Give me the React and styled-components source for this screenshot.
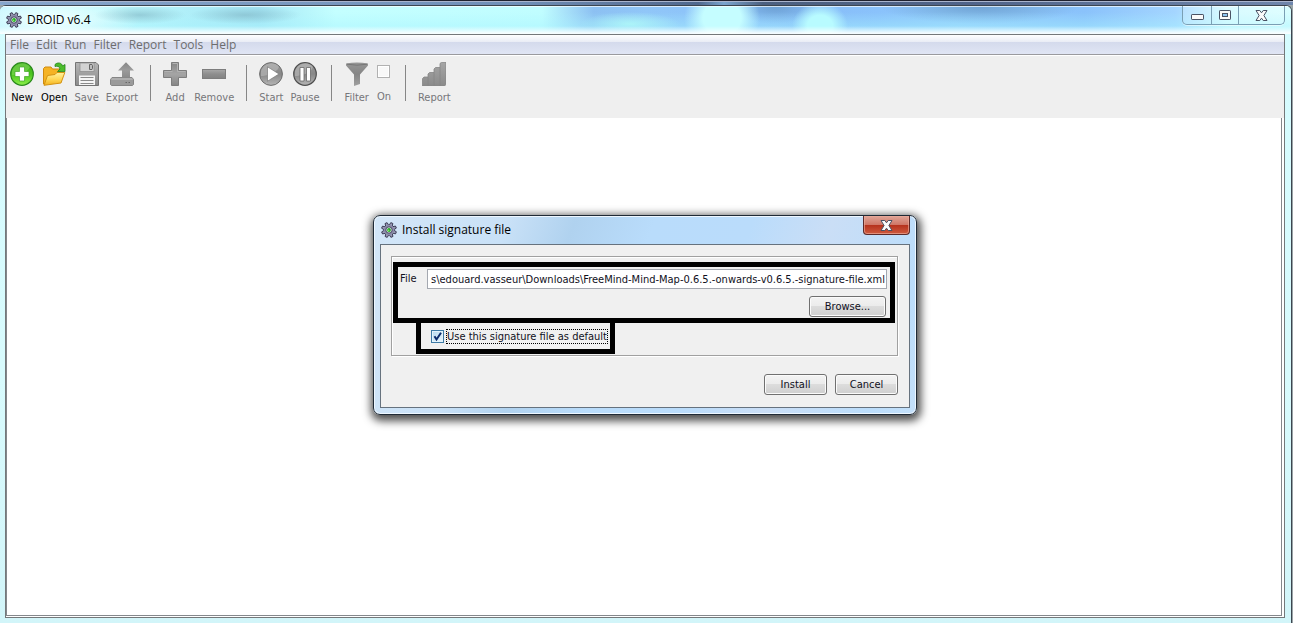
import React, { useId, useState } from "react";
import styled, { createGlobalStyle, css } from "styled-components";

const uiFont = `"DejaVu Sans Condensed", "DejaVu Sans", Tahoma, sans-serif`;
const captionFont = `"Open Sans", "Segoe UI", sans-serif`;

const GlobalStyle = createGlobalStyle`
  *, *::before, *::after { box-sizing: border-box; }
  body { margin: 0; background: #dffbfd; }
  button, input { font: inherit; color: inherit; }
  svg { display: block; flex: none; }
`;

const Desktop = styled.div`
  display: flex;
  flex-direction: column;
  min-height: 100vh;
  padding: 5px 1px 0 0;
  font: 11px/16px ${uiFont};
  background: linear-gradient(#20222e 0 1px, #a9b4cc 1px 2px, transparent 2px 5px, #9aa5a8 5px),
    linear-gradient(90deg, #86a6cc, #6f8fb8 40%, #5a7298 50%, #4f688e 54%, #7aa5cf 56%, #4c6080 59%, #50648a 75%, #6f86ac);
`;

const Window = styled.main`
  flex: 1;
  display: flex;
  flex-direction: column;
  padding: 0 6px 5px 5px;
  border: solid #3c4650;
  border-width: 1px 1px 0 0;
  border-radius: 6px 6px 0 0;
  background: linear-gradient(#d5fcff, #d8fbfd 60%, #d2f5f9);
  box-shadow: inset 0 1px 0 #e9fbff;
`;

const TitleBar = styled.header`
  display: flex;
  justify-content: space-between;
  height: 28px;
  margin: 0 -6px 0 -5px;
  padding: 0 6px 0 6px;
  border-radius: 5px 5px 0 0;
  background:
    linear-gradient(#ffffffaa 0 1px, transparent 1px 20px, #ffffffe0 27px),
    radial-gradient(ellipse 46px 9px at 140px 9px, #7fb3c299, transparent),
    radial-gradient(ellipse 56px 9px at 245px 9px, #7fb3c299, transparent),
    radial-gradient(ellipse 90px 24px at 50px 14px, #f3ffff, #f3ffff00),
    radial-gradient(ellipse 28px 24px at 820px 20px, #b8fbff 45%, #b8fbff00),
    radial-gradient(ellipse 38px 34px at 722px 12px, #c5fdff 50%, #c5fdff00),
    linear-gradient(#a8f4ff00 6px, #a8f4ff88 24px),
    radial-gradient(ellipse 44px 18px at 775px 0, #6ca0d2, #6ca0d200),
    radial-gradient(ellipse 50px 12px at 630px 18px, #aef4f5, #aef4f500),
    radial-gradient(ellipse 100px 18px at 980px 0, #6fa2d2, #6fa2d200),
    linear-gradient(90deg, #bff5ff, #c4ffff 4%, #a5e6f5 20%, #c4ffff 26%, #c0fdff 42%, #8cc0f2 46%, #90c6f8 50%, #8cc2fa 56%, #86bcf8 62%, #8ac2fb 68%, #90cafb 74%, #8ac2fb 84%, #a4d5ff 91%, #d0fbff 95%, #d8feff);
`;

const Caption = styled.div`
  display: flex;
  align-items: center;
  gap: 5px;
  font: 12px/16px ${captionFont};
  color: #000;
`;

const CaptionText = styled.h1`
  margin: 0;
  font: inherit;
`;

const WindowControls = styled.div`
  display: flex;
  height: 19px;
  border: 1px solid #7a9fb4;
  border-top: 0;
  border-radius: 0 0 5px 5px;
  overflow: hidden;
  background: #ffffff30;
  box-shadow: 0 1px 0 #ffffff88;
`;

const WindowControl = styled.button`
  display: grid;
  place-items: center;
  width: ${(p) => p.$width}px;
  padding: 0;
  border: 0;
  background: none;

  & + & { border-left: 1px solid #7a9fb4; }
`;

const Client = styled.div`
  flex: 1;
  display: flex;
  flex-direction: column;
  border: 1px solid #74787a;
  background: #fff;
`;

const MenuBar = styled.nav`
  display: flex;
  align-items: center;
  gap: 7px;
  height: 20px;
  padding: 0 4px;
  border-bottom: 1px solid #9a9a9e;
  background: linear-gradient(#fff, #e9ecf5 7px, #d4daec 7px, #e0e5f4);
  font: 12px/16px ${captionFont};
  color: #6d6d6d;
`;

const MenuItem = styled.button`
  padding: 0;
  border: 0;
  background: none;
`;

const ToolBar = styled.div`
  display: flex;
  align-items: flex-start;
  gap: 7px;
  height: 63px;
  padding: 6px 4px 0;
  border-top: 1px solid #fff;
  background: #efefef;
`;

const toolPart = css`
  display: flex;
  flex-direction: column;
  align-items: center;
  gap: 4px;
  padding: 0;
  border: 0;
  background: none;
  color: #000;
`;

const Tool = styled.button`
  ${toolPart}
  &:disabled { color: #76767a; }
`;

const ToolCheck = styled.label`
  ${toolPart}
  gap: 11px;
  padding: 3px 2px 0 1px;
  color: #76767a;
`;

const ToolCheckBox = styled.input`
  appearance: none;
  width: 13px;
  height: 13px;
  margin: 0;
  border: 1px solid #b1b1b1;
  background: #f8f8f8;
  box-shadow: inset 0 0 0 1px #fff;
`;

const Separator = styled.div`
  width: 1px;
  height: 36px;
  margin: 3px 5px 0;
  background: #868686;
`;

const Workspace = styled.section`
  flex: 1;
  margin: 0 2px 1px 0;
  border: solid #84888c;
  border-width: 0 1px 1px;
`;

const DialogLayer = styled.div`
  position: absolute;
  inset: 0;
  display: flex;
  align-items: center;
  justify-content: center;
  padding: 7px 3px 0 0;
`;

const Dialog = styled.section`
  width: 544px;
  max-width: 100%;
  padding: 0 6px 6px;
  border: 1px solid #1f2a36;
  border-radius: 7px;
  background: linear-gradient(110deg, #d3e6f8, #c9e1f7 22%, #b0d2ef 33%, #b9dcfb 46%, #badcfb 62%, #cadef6 75%, #bbddfb 92%, #c4e0fa);
  box-shadow: inset 0 0 0 1px #eef7ff, 1px 3px 9px 3px #000000b0;
`;

const DialogTitleBar = styled.header`
  display: flex;
  justify-content: space-between;
  height: 28px;
  padding-left: 1px;
`;

const CloseButton = styled.button`
  display: grid;
  place-items: center;
  width: 47px;
  height: 19px;
  padding: 0;
  border: 1px solid #5c2a2a;
  border-top: 0;
  border-radius: 0 0 4px 4px;
  background: linear-gradient(#e0a598, #cf7565 9px, #b5311c 9px, #cf5a3f);
  box-shadow: inset 0 0 0 1px #eba999aa;
`;

const DialogBody = styled.form`
  padding: 11px 11px 12px 10px;
  border: 1px solid #66727e;
  background: #f0f0f0;
  color: #10101c;
`;

const Group = styled.div`
  padding: 5px 2px 1px 1px;
  border: 1px solid #a0a0a0;
  box-shadow: inset 1px 1px 0 #fff, 1px 1px 0 #fff;
`;

const FilePanel = styled.div`
  display: flex;
  flex-direction: column;
  gap: 7px;
  padding: 2px 3px 1px 2px;
  border: 5px solid #000;
`;

const FileRow = styled.div`
  display: flex;
  align-items: center;
`;

const FileLabel = styled.label`
  width: 27px;
  flex: none;
`;

const FileInput = styled.input`
  flex: 1;
  min-width: 0;
  height: 20px;
  padding: 0 1px;
  border: 1px solid #a4a8b0;
  background: #fff;
  text-align: right;
`;

const ButtonRow = styled.div`
  display: flex;
  justify-content: flex-end;
  gap: 8px;
  margin: ${(p) => (p.$footer ? "18px 0 0" : "0 1px 0 0")};
`;

const PushButton = styled.button`
  width: ${(p) => p.$width || 63}px;
  height: 21px;
  padding: 0;
  border: 1px solid #707070;
  border-radius: 3px;
  background: linear-gradient(#f3f3f3, #ebebeb 50%, #dcdcdc 50%, #cfcfcf);
  box-shadow: inset 0 0 0 1px #fbfbfb;
`;

const DefaultPanel = styled.div`
  display: flex;
  align-items: center;
  gap: 2px;
  width: 199px;
  height: 31px;
  margin-left: 23px;
  padding-left: 10px;
  border: solid #000;
  border-width: 0 5px 5px;
`;

const CheckMark = styled.span`
  display: grid;
  flex: none;

  & > * { grid-area: 1 / 1; }
  & > svg { pointer-events: none; visibility: hidden; }
  & > input:checked + svg { visibility: visible; }
`;

const CheckBox = styled.input`
  appearance: none;
  width: 13px;
  height: 13px;
  margin: 0;
  border: 1px solid #3d7aa5;
  background: linear-gradient(135deg, #b6d9ee, #e9f6fd);
  box-shadow: inset 0 0 0 1px #e3f3fc;
`;

const CheckLabel = styled.label`
  border: 1px dotted #000;
  line-height: 13px;
  white-space: nowrap;
`;

const gearTeeth = [22, 67, 112, 157, 202, 247, 292, 337];

function GearIcon() {
  return (
    <svg width="16" height="16" viewBox="0 0 16 16" aria-hidden="true">
      <g fill="#9c9cb8" stroke="#2b2b42" strokeWidth=".8">
        {gearTeeth.map((a) => (
          <path key={a} d="M6.300 4L6.900 .500H9.100L9.700 4Z" transform={`rotate(${a} 8 8)`} />
        ))}
      </g>
      <circle cx="8" cy="8" r="5.200" fill="#8c8cab" />
      <circle cx="8" cy="8" r="3.200" fill="#e3e3ee" stroke="#3a3a52" strokeWidth=".9" />
      <circle cx="8" cy="8" r="1.900" fill="#1fae1f" />
      <circle cx="7.600" cy="8.400" r=".8" fill="#7df05a" />
    </svg>
  );
}

function CrossGlyph() {
  return (
    <svg width="13" height="11" viewBox="0 0 13 11" aria-hidden="true">
      <path d="M1 .500H4.800L6.500 2.800 8.200 .500H12L8.900 5.500 12 10.500H8.200L6.500 8.200 4.800 10.500H1L4.100 5.500Z" fill="#fafafa" stroke="#4a5264" />
    </svg>
  );
}

function MinimizeGlyph() {
  return (
    <svg width="13" height="10" viewBox="0 0 13 10" aria-hidden="true">
      <rect x=".5" y="4.500" width="12" height="5" rx=".6" fill="#fafafa" stroke="#4a5264" />
    </svg>
  );
}

function MaximizeGlyph() {
  return (
    <svg width="12" height="10" viewBox="0 0 12 10" aria-hidden="true">
      <rect x=".5" y=".5" width="11" height="9" rx=".6" fill="#fafafa" stroke="#4a5264" />
      <rect x="3.500" y="3.500" width="5" height="3" fill="#8fc6f2" stroke="#4a5264" />
    </svg>
  );
}

function ToolIcon({ children, stops }) {
  const id = useId();
  return (
    <svg width="24" height="24" viewBox="0 0 24 24" aria-hidden="true">
      <defs>
        <linearGradient id={id} x1="0" y1="0" x2="0" y2="1">
          {stops.map((color, i) => (
            <stop key={i} offset={i / (stops.length - 1)} stopColor={color} />
          ))}
        </linearGradient>
      </defs>
      {children(`url(#${id})`)}
    </svg>
  );
}

const NewIcon = () => (
  <ToolIcon stops={["#3fae1c", "#4cc41f", "#8cf04a"]}>
    {(fill) => (
      <>
        <circle cx="12" cy="12" r="11.3" fill={fill} stroke="#2b8a1e" strokeWidth="1.2" />
        <path d="M2 13C6 13 17 12 20 5A10.5 10.5 0 0 0 2 9Z" fill="#83d95c" opacity=".55" />
        <path d="M9.5 5h5v4.500h4.500v5h-4.500V19h-5v-4.500H5v-5h4.500Z" fill="#fff" stroke="#42a828" strokeWidth=".7" />
      </>
    )}
  </ToolIcon>
);

const OpenIcon = () => (
  <ToolIcon stops={["#fff3a0", "#ffd95a", "#f4b21c"]}>
    {(fill) => (
      <>
        <path d="M1.500 22V6.500L3 5h6l1.500 2H18v6L5 22Z" fill="#f5b324" stroke="#cf8a0e" />
        <path d="M2 23.300L5.500 13.500 13 12.500l2-2h7.800L19 21Z" fill={fill} stroke="#d39312" />
        <path d="M13 2.500C16-.3 20 1 20.500 4L23 2.500V9.500H15.500L18 7C17.500 4.500 15.500 3.700 13 4.500Z" fill="#4dbd2c" stroke="#25851b" strokeWidth=".8" />
      </>
    )}
  </ToolIcon>
);

const SaveIcon = () => (
  <ToolIcon stops={["#b5b5b5", "#8b8b8b"]}>
    {(fill) => (
      <>
        <path d="M.5.500H21L23.500 3V23.500H.5Z" fill={fill} stroke="#747474" />
        <path d="M5 1H19V9.500H5Z" fill="#d2d2d2" stroke="#8b8b8b" strokeWidth=".7" />
        <path d="M14.500 2.500h2.500l.5 1v3l-.5 1h-2.500Z" fill="#bcbcbc" stroke="#666" />
        <path d="M4 13.500H20V23H4Z" fill="#f5f5f5" />
        <path d="M5.500 15.500H18.500M5.500 18.500H18.500M5.500 21.500H18.500" stroke="#8a8a8a" strokeWidth="1.200" />
      </>
    )}
  </ToolIcon>
);

const ExportIcon = () => (
  <ToolIcon stops={["#858585", "#9b9b9b", "#8b8b8b"]}>
    {(fill) => (
      <>
        <path d="M2 15.500H22L23.500 17.500V22.500L22.500 23.500H1.500L.5 22.500V17.500Z" fill="#9a9a9a" stroke="#858585" />
        <path d="M2 16H22L23 18H1Z" fill="#aeaeae" />
        <path d="M16 .300L24 8.500H20V15.500H12V8.500H8Z" fill={fill} />
        <path d="M15.500 20.500h1.500M18.500 20.500h1.500" stroke="#666" />
      </>
    )}
  </ToolIcon>
);

const AddIcon = () => (
  <ToolIcon stops={["#858585", "#a5a5a5", "#858585"]}>
    {(fill) => (
      <>
        <path d="M8.500.500h7v8h8v7h-8v8h-7v-8h-8v-7h8Z" fill={fill} stroke="#7d7d7d" />
        <path d="M9.500 1.500h5v8h8M1.500 9.500h8" fill="none" stroke="#b2b2b2" />
      </>
    )}
  </ToolIcon>
);

const RemoveIcon = () => (
  <ToolIcon stops={["#a8a8a8", "#8e8e8e", "#828282"]}>
    {(fill) => <rect x=".5" y="7.500" width="23" height="9" fill={fill} stroke="#7d7d7d" />}
  </ToolIcon>
);

const StartIcon = () => (
  <ToolIcon stops={["#9a9a9a", "#888888", "#b5b5b5"]}>
    {(fill) => (
      <>
        <circle cx="12" cy="12" r="11.400" fill={fill} stroke="#6d6d6d" />
        <path d="M2 14C7 14 17 12 20 5A10.500 10.500 0 0 0 2 9Z" fill="#b8b8b8" opacity=".65" />
        <path d="M8.500 4.800L20 12 8.500 19.200Z" fill="#fff" stroke="#777" strokeWidth=".7" />
      </>
    )}
  </ToolIcon>
);

const PauseIcon = () => (
  <ToolIcon stops={["#9a9a9a", "#888888", "#b5b5b5"]}>
    {(fill) => (
      <>
        <circle cx="12" cy="12" r="11.300" fill={fill} stroke="#505050" strokeWidth="1.200" />
        <path d="M2 14C7 14 17 12 20 5A10.500 10.500 0 0 0 2 9Z" fill="#b8b8b8" opacity=".65" />
        <path d="M7 5.500h4v13.500H7ZM13.500 5.500h4v13.500h-4Z" fill="#fff" stroke="#6a6a6a" strokeWidth=".8" />
      </>
    )}
  </ToolIcon>
);

const FilterIcon = () => (
  <ToolIcon stops={["#979797", "#858585", "#a0a0a0"]}>
    {(fill) => (
      <>
        <path d="M1 1.500Q12-.5 23 1.500V3.500L15 12.500V22L9 24V12.500L1 3.500Z" fill={fill} />
        <path d="M2 2.200Q12 4.200 22 2.200" fill="none" stroke="#777" />
      </>
    )}
  </ToolIcon>
);

const ReportIcon = () => (
  <ToolIcon stops={["#a6a6a6", "#8a8a8a"]}>
    {(fill) => (
      <path d="M.500 24V16.500L2 15H6V12L7.500 10.500H12V7L13.500 5.500H18V1.500L19.500.300H24V22.500L22.500 24ZM6 15V24M12 10.500V24M18 5.500V24" fill={fill} stroke="#858585" strokeWidth=".8" />
    )}
  </ToolIcon>
);

const menus = ["File", "Edit", "Run", "Filter", "Report", "Tools", "Help"];

function ToolButton({ icon: Icon, label, disabled = true }) {
  return (
    <Tool type="button" disabled={disabled}>
      <Icon />
      {label}
    </Tool>
  );
}

function InstallDialog() {
  const [file, setFile] = useState(
    "s\\edouard.vasseur\\Downloads\\FreeMind-Mind-Map-0.6.5.-onwards-v0.6.5.-signature-file.xml"
  );
  return (
    <Dialog role="dialog" aria-labelledby="install-title">
      <DialogTitleBar>
        <Caption>
          <GearIcon />
          <CaptionText as="h2" id="install-title">Install signature file</CaptionText>
        </Caption>
        <CloseButton type="button" aria-label="Close dialog"><CrossGlyph /></CloseButton>
      </DialogTitleBar>
      <DialogBody onSubmit={(e) => e.preventDefault()}>
        <Group>
          <FilePanel>
            <FileRow>
              <FileLabel htmlFor="signature-file">File</FileLabel>
              <FileInput id="signature-file" type="text" value={file} onChange={(e) => setFile(e.target.value)} />
            </FileRow>
            <ButtonRow>
              <PushButton type="button" $width={77}>Browse...</PushButton>
            </ButtonRow>
          </FilePanel>
          <DefaultPanel>
            <CheckMark>
              <CheckBox id="use-default" type="checkbox" defaultChecked />
              <svg width="13" height="13" viewBox="0 0 13 13" aria-hidden="true">
                <path d="M3.500 6.300L5.500 9.500 10 2.800" fill="none" stroke="#0b2a6b" strokeWidth="2" />
              </svg>
            </CheckMark>
            <CheckLabel htmlFor="use-default">Use this signature file as default</CheckLabel>
          </DefaultPanel>
        </Group>
        <ButtonRow $footer>
          <PushButton type="submit">Install</PushButton>
          <PushButton type="button">Cancel</PushButton>
        </ButtonRow>
      </DialogBody>
    </Dialog>
  );
}

export default function App() {
  return (
    <>
      <GlobalStyle />
      <Desktop>
        <Window>
          <TitleBar>
            <Caption>
              <GearIcon />
              <CaptionText>DROID v6.4</CaptionText>
            </Caption>
            <WindowControls>
              <WindowControl type="button" $width={28} aria-label="Minimize"><MinimizeGlyph /></WindowControl>
              <WindowControl type="button" $width={27} aria-label="Maximize"><MaximizeGlyph /></WindowControl>
              <WindowControl type="button" $width={46} aria-label="Close"><CrossGlyph /></WindowControl>
            </WindowControls>
          </TitleBar>
          <Client>
            <MenuBar>
              {menus.map((name) => <MenuItem type="button" key={name}>{name}</MenuItem>)}
            </MenuBar>
            <ToolBar>
              <ToolButton icon={NewIcon} label="New" disabled={false} />
              <ToolButton icon={OpenIcon} label="Open" disabled={false} />
              <ToolButton icon={SaveIcon} label="Save" />
              <ToolButton icon={ExportIcon} label="Export" />
              <Separator />
              <ToolButton icon={AddIcon} label="Add" />
              <ToolButton icon={RemoveIcon} label="Remove" />
              <Separator />
              <ToolButton icon={StartIcon} label="Start" />
              <ToolButton icon={PauseIcon} label="Pause" />
              <Separator />
              <ToolButton icon={FilterIcon} label="Filter" />
              <ToolCheck>
                <ToolCheckBox type="checkbox" disabled />
                On
              </ToolCheck>
              <Separator />
              <ToolButton icon={ReportIcon} label="Report" />
            </ToolBar>
            <Workspace />
          </Client>
        </Window>
        <DialogLayer>
          <InstallDialog />
        </DialogLayer>
      </Desktop>
    </>
  );
}
